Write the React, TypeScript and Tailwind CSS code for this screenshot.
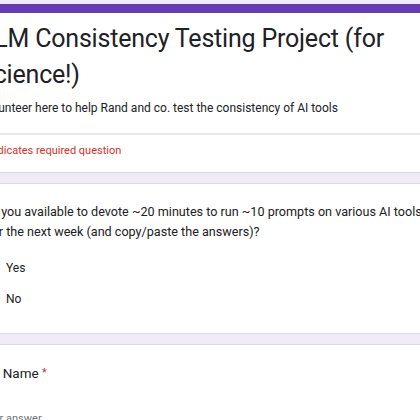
export default function App() {
  return (
    <div className="h-[420px] w-[420px] overflow-hidden bg-[#f0ebf8] font-['Roboto',sans-serif] text-[#202124]">
      <div className="-ml-[44px] flex w-[540px] flex-col gap-[10px] pt-[4px]">

        {/* HEADER CARD */}

        <div className="rounded-t-lg border border-t-[9px] border-[#dadce0] border-t-[#673ab7] bg-white">
          <div className="h-[122px] border-b-2 border-[#e8e8ec] pl-[24px] pt-[8px]">
            <h1 className="w-[440px] text-[25px] leading-[36px] tracking-[-0.2px]">
              LLM Consistency Testing Project (for science!)
            </h1>
            <p className="mt-[6px] text-[12px] leading-[18px]">
              Volunteer here to help Rand and co. test the consistency of AI tools
            </p>
          </div>
          <div className="h-[37px] pl-[24px] pt-[7px] text-[11px] leading-[18px] text-[#d93025]">
            * Indicates required question
          </div>
        </div>

        {/* QUESTION CARD */}

        <div className="h-[151px] rounded-lg border border-[#dadce0] bg-white pl-[22px] pt-[18px]">
          <div className="w-[456px] text-[12.6px] leading-[20px]">
            Are you available to devote ~20 minutes to run ~10 prompts on various AI tools over the next week (and copy/paste the answers)?
          </div>
          <div className="mt-[10px] flex flex-col pl-[2px]">
            {["Yes", "No"].map((opt) => (
              <label key={opt} className="flex h-[31px] items-center gap-[9px] text-[12px]">
                <span className="h-[16px] w-[16px] rounded-full border-2 border-[#5f6368]" />
                <span>{opt}</span>
              </label>
            ))}
          </div>
        </div>

        {/* NAME CARD */}

        <div className="h-[120px] rounded-lg border border-[#dadce0] bg-white pl-[21px] pt-[18px]">
          <div className="text-[13.5px] leading-[20px]">
            Full Name <span className="align-top text-[11px] text-[#d93025]">*</span>
          </div>
          <div className="ml-[3px] mt-[27px] text-[11px] leading-[18px] text-[#70757a]">
            Your answer
          </div>
        </div>
      </div>
    </div>
  );
}
